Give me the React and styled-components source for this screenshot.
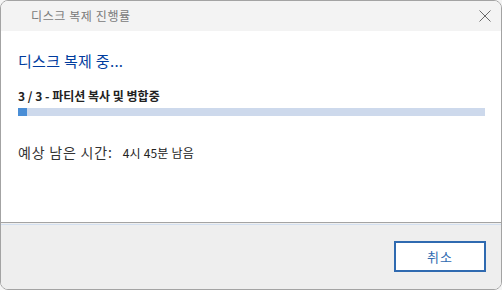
import React from "react";
import styled, { createGlobalStyle } from "styled-components";

const Global = createGlobalStyle`
  html, body { margin: 0; padding: 0; background: #f4f4f4; }
  body { font-family: "Noto Sans CJK KR", "Noto Sans", sans-serif; }
  * { box-sizing: border-box; }
`;

const Window = styled.div`
  width: 502px;
  height: 290px;
  border: 1px solid #a3a3a3;
  border-radius: 8px;
  overflow: hidden;
  display: flex;
  flex-direction: column;
  background: #fff;
`;

const TitleBar = styled.div`
  height: 30px;
  flex: none;
  background: #f3f3f3;
  display: flex;
  align-items: center;
  justify-content: space-between;
  padding: 0 9px 0 30px;
`;

const Title = styled.span`
  font-size: 12px;
  letter-spacing: 0.6px;
  line-height: 16px;
  color: #7a7a7a;
`;

const CloseButton = styled.div`
  width: 14px;
  height: 14px;
  display: flex;
  align-items: center;
  justify-content: center;
`;

const Content = styled.div`
  flex: 1;
  background: #fff;
  padding: 20px 16px 0 17px;
  display: flex;
  flex-direction: column;
`;

const Heading = styled.div`
  font-size: 15px;
  letter-spacing: 0.3px;
  line-height: 20px;
  color: #003c9e;
`;

const Step = styled.div`
  margin-top: 17px;
  font-size: 12px;
  font-weight: 700;
  line-height: 16px;
  color: #222;
`;

const Track = styled.div`
  margin-top: 4px;
  height: 8px;
  background: #cdd9ec;
`;

const Fill = styled.div`
  height: 100%;
  background: #4a8ed6;
`;

const TimeRow = styled.div`
  margin-top: 26px;
  display: flex;
  align-items: baseline;
  gap: 10px;
`;

const TimeLabel = styled.span`
  font-size: 14px;
  letter-spacing: 0.8px;
  line-height: 20px;
  color: #333;
`;

const TimeValue = styled.span`
  font-size: 12px;
  letter-spacing: 0.2px;
  line-height: 20px;
  color: #222;
`;

const Footer = styled.div`
  flex: none;
  height: 67px;
  border-top: 1px solid #a3a3a3;
  background: #eeeeee;
  display: flex;
  flex-direction: column;
`;

const FooterGlow = styled.div`
  height: 2px;
  border-top: 1px solid #f0f0f0;
  border-bottom: 1px solid #d2dff0;
`;

const ButtonRow = styled.div`
  flex: 1;
  display: flex;
  justify-content: flex-end;
  align-items: flex-start;
  padding: 16px 15px 0 0;
`;

const Button = styled.button`
  width: 92px;
  height: 31px;
  border: 2px solid #2f6ab0;
  background: #fff;
  color: #2f6ab0;
  font-family: inherit;
  font-size: 13px;
  letter-spacing: 1px;
  line-height: 18px;
  padding: 0;
  cursor: pointer;
`;

export default function App() {
  const progress = 2;
  return (
    <>
      <Global />
      <Window>
        <TitleBar>
          <Title>디스크 복제 진행률</Title>
          <CloseButton>
            <svg width="12" height="12" viewBox="0 0 12 12">
              <path d="M0.5 0.5 L11.5 11.5 M11.5 0.5 L0.5 11.5" stroke="#6a6a6a" strokeWidth="1" fill="none" />
            </svg>
          </CloseButton>
        </TitleBar>
        <Content>
          <Heading>디스크 복제 중...</Heading>
          <Step>3 / 3 - 파티션 복사 및 병합중</Step>
          <Track>
            <Fill style={{ width: `${progress}%` }} />
          </Track>
          <TimeRow>
            <TimeLabel>예상 남은 시간:</TimeLabel>
            <TimeValue>4시 45분 남음</TimeValue>
          </TimeRow>
        </Content>
        <Footer>
          <FooterGlow />
          <ButtonRow>
            <Button>취소</Button>
          </ButtonRow>
        </Footer>
      </Window>
    </>
  );
}
